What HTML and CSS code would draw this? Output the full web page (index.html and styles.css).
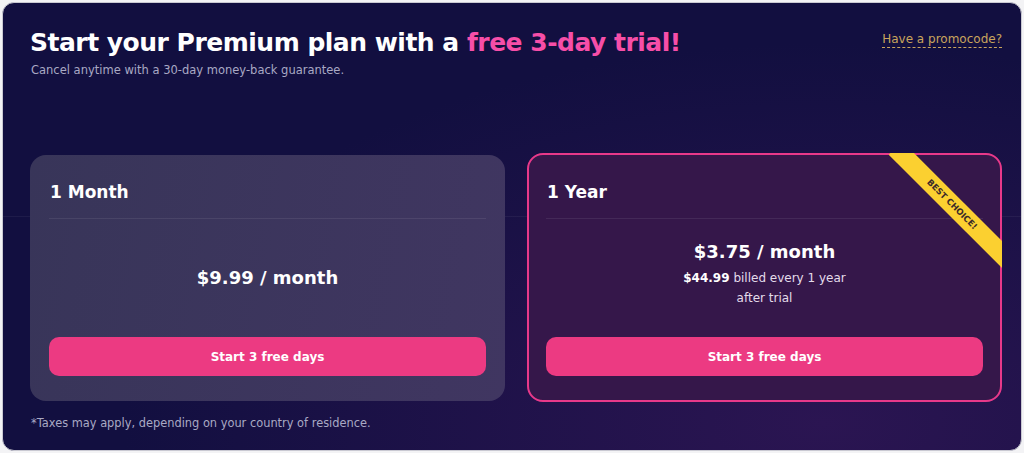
FILE: index.html
```html
<!DOCTYPE html>
<html lang="en">
<head>
<meta charset="utf-8">
<title>Premium plan</title>
<link rel="stylesheet" href="styles.css">
</head>
<body>
<div class="panel">
  <header class="head">
    <div class="head-text">
      <h1 class="title">Start your Premium plan with a <span class="accent">free 3-day trial!</span></h1>
      <p class="subtitle">Cancel anytime with a 30-day money-back guarantee.</p>
    </div>
    <a class="promo" href="#">Have a promocode?</a>
  </header>
  <div class="plans">
    <section class="card card-month">
      <h2 class="card-title">1 Month</h2>
      <div class="card-body">
        <div class="price">$9.99 / month</div>
      </div>
      <button class="cta">Start 3 free days</button>
    </section>
    <section class="card card-year">
      <div class="ribbon-clip"><div class="ribbon">BEST CHOICE!</div></div>
      <h2 class="card-title">1 Year</h2>
      <div class="card-body">
        <div class="price">$3.75 / month</div>
        <div class="billed"><b>$44.99</b> billed every 1 year<br>after trial</div>
      </div>
      <button class="cta">Start 3 free days</button>
    </section>
  </div>
  <p class="note">*Taxes may apply, depending on your country of residence.</p>
</div>
</body>
</html>
```
FILE: styles.css
```css
* { box-sizing: border-box; }
html, body { margin: 0; padding: 0; }
body {
  background: #f3f3f5;
  font-family: "DejaVu Sans", Inter, sans-serif;
  width: 1024px;
  height: 453px;
  overflow: hidden;
}
.panel {
  margin: 2px 0 0 2px;
  width: 1020px;
  height: 449px;
  border-radius: 12px;
  border: 1px solid #c9c9d2;
  background:
    linear-gradient(to bottom, transparent 213px, rgba(255,255,255,0.05) 213px, rgba(255,255,255,0.05) 214px, transparent 214px),
    radial-gradient(ellipse 700px 380px at 820px 420px, #2b1552 0%, rgba(43,21,82,0) 100%),
    #120f40;
  padding: 25px 19px 0 27px;
  display: flex;
  flex-direction: column;
}
.head {
  display: flex;
  justify-content: space-between;
  align-items: flex-start;
}
.title {
  margin: 0;
  font-size: 25px;
  font-weight: 700;
  line-height: 30px;
  color: #ffffff;
  letter-spacing: -0.5px;
}
.accent { color: #f74ea8; }
.subtitle {
  margin: 5px 0 0 1px;
  font-size: 11.5px;
  line-height: 14px;
  color: #a9a9c4;
}
.promo {
  margin-top: 3px;
  font-size: 12px;
  line-height: 16px;
  color: #c9a45c;
  text-decoration: none;
  border-bottom: 1px dashed #c9a45c;
}
.plans {
  margin-top: 76px;
  display: grid;
  grid-template-columns: 475px 475px;
  column-gap: 22px;
  align-items: start;
}
.card {
  position: relative;
  height: 246px;
  border-radius: 16px;
  padding: 0 19px 25px 19px;
  display: flex;
  flex-direction: column;
}
.card-month {
  background: linear-gradient(100deg, #383559 0%, #403661 100%);
  margin-top: 2px;
}
.card-year {
  height: 249px;
  background: #35174a;
  border: 2px solid #e8398a;
  padding: 0 17px 24px 17px;
}
.card-title {
  margin: 0;
  padding: 24px 0 13px 1px;
  font-size: 17px;
  line-height: 26px;
  font-weight: 700;
  color: #ffffff;
  border-bottom: 1px solid rgba(255,255,255,0.08);
}
.card-body {
  flex: 1;
  display: flex;
  flex-direction: column;
  align-items: center;
  justify-content: center;
  text-align: center;
  color: #ffffff;
}
.price {
  font-size: 18px;
  font-weight: 700;
  line-height: 24px;
}
.card-year .card-body { justify-content: flex-start; padding-top: 21px; }
.billed {
  margin-top: 4px;
  font-size: 12px;
  line-height: 20px;
  color: #e4dcea;
}
.billed b { font-weight: 700; color: #ffffff; }
.cta {
  height: 39px;
  width: 100%;
  border: none;
  border-radius: 10px;
  background: #ec3a82;
  color: #ffffff;
  font-family: inherit;
  font-size: 12px;
  font-weight: 700;
  cursor: pointer;
}
.ribbon-clip {
  position: absolute;
  inset: -2px;
  border-radius: 16px;
  overflow: hidden;
  pointer-events: none;
}
.ribbon {
  position: absolute;
  top: 42px;
  right: -30px;
  width: 160px;
  height: 19px;
  transform: rotate(45deg);
  background: #fbd030;
  color: #3a2a2a;
  font-size: 8.5px;
  font-weight: 700;
  line-height: 19px;
  text-align: center;
}
.note {
  margin: 13px 0 0 1px;
  font-size: 11.4px;
  line-height: 16px;
  color: #a9a9c4;
}
```
